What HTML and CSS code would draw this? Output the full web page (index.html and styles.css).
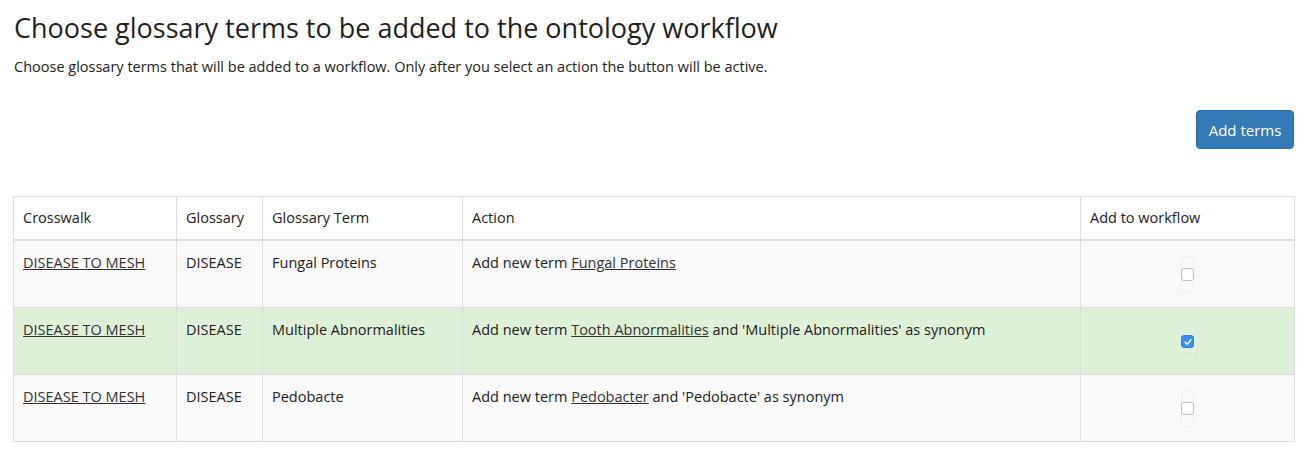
FILE: index.html
```html
<!DOCTYPE html>
<html lang="en">
<head>
<meta charset="utf-8">
<title>Choose glossary terms</title>
<link rel="stylesheet" href="styles.css">
</head>
<body>
<div class="page">
  <h1 class="title">Choose glossary terms to be added to the ontology workflow</h1>
  <p class="subtitle">Choose glossary terms that will be added to a workflow. Only after you select an action the button will be active.</p>
  <div class="actions">
    <button class="btn-primary" type="button">Add terms</button>
  </div>
  <table class="terms">
    <colgroup>
      <col class="c-cross">
      <col class="c-gloss">
      <col class="c-term">
      <col class="c-action">
      <col class="c-add">
    </colgroup>
    <thead>
      <tr>
        <th>Crosswalk</th>
        <th>Glossary</th>
        <th>Glossary Term</th>
        <th>Action</th>
        <th>Add to workflow</th>
      </tr>
    </thead>
    <tbody>
      <tr class="striped">
        <td><a href="#">DISEASE TO MESH</a></td>
        <td>DISEASE</td>
        <td>Fungal Proteins</td>
        <td>Add new term <a href="#">Fungal Proteins</a></td>
        <td class="check-cell"><span class="check-wrap"><span class="check"></span></span></td>
      </tr>
      <tr class="success">
        <td><a href="#">DISEASE TO MESH</a></td>
        <td>DISEASE</td>
        <td>Multiple Abnormalities</td>
        <td>Add new term <a href="#">Tooth Abnormalities</a> and 'Multiple Abnormalities' as synonym</td>
        <td class="check-cell"><span class="check-wrap"><span class="check checked"><svg viewBox="0 0 12 12" width="10" height="10"><path d="M2.5 6.3 L5 8.6 L9.6 3.2" fill="none" stroke="#fff" stroke-width="1.8" stroke-linecap="round" stroke-linejoin="round"/></svg></span></span></td>
      </tr>
      <tr class="striped">
        <td><a href="#">DISEASE TO MESH</a></td>
        <td>DISEASE</td>
        <td>Pedobacte</td>
        <td>Add new term <a href="#">Pedobacter</a> and 'Pedobacte' as synonym</td>
        <td class="check-cell"><span class="check-wrap"><span class="check"></span></span></td>
      </tr>
    </tbody>
  </table>
</div>
</body>
</html>
```
FILE: styles.css
```css
html, body {
  margin: 0;
  padding: 0;
  background: #fff;
}
body {
  font-family: "Open Sans", "Liberation Sans", sans-serif;
  color: #222;
  font-size: 14.5px;
}
.page {
  padding: 0 14px 0 13px;
}
.title {
  font-size: 27px;
  font-weight: 400;
  margin: 0;
  padding-top: 8px;
  line-height: 40px;
  padding-left: 1px;
  color: #1f1f1f;
}
.subtitle {
  margin: 9px 0 0 1px;
  font-size: 14.5px;
  line-height: 20px;
}
.actions {
  display: flex;
  justify-content: flex-end;
  margin-top: 33px;
}
.btn-primary {
  font-family: "Open Sans", "Liberation Sans", sans-serif;
  background: #337ab7;
  border: 1px solid #2e6da4;
  color: #fff;
  font-size: 15px;
  height: 39px;
  width: 98px;
  border-radius: 4px;
  padding: 0;
}
.terms {
  margin-top: 47px;
  width: 1281px;
  border-collapse: collapse;
  table-layout: fixed;
  border: 1px solid #ddd;
}
.c-cross { width: 163px; }
.c-gloss { width: 86px; }
.c-term { width: 200px; }
.c-action { width: 618px; }
.c-add { width: 214px; }
.terms th,
.terms td {
  border: 1px solid #ddd;
  text-align: left;
  vertical-align: top;
  padding: 12px 9px;
  line-height: 20px;
  font-size: 14.5px;
}
.terms th {
  font-weight: 400;
  padding: 11px 9px;
  border-bottom: 2px solid #ddd;
}
.terms td {
  height: 42px;
}
.terms a {
  color: #333;
  text-decoration: underline;
}
.striped td { background: #f9f9f9; }
.success td { background: #dff0d8; }
.terms .check-cell {
  text-align: center;
}
.check-wrap {
  display: inline-flex;
  align-items: center;
  justify-content: center;
  width: 13px;
  height: 37px;
  margin-top: 3px;
  border: 1px solid #f0f0f0;
  border-radius: 5px;
  box-sizing: border-box;
}
.check {
  display: flex;
  align-items: center;
  justify-content: center;
  width: 13px;
  height: 13px;
  border: 1px solid #bdbdbd;
  border-radius: 3px;
  background: #fff;
  box-sizing: border-box;
  flex: none;
}
.check.checked {
  background: #3a8ef6;
  border-color: #2f7ee0;
}
```
